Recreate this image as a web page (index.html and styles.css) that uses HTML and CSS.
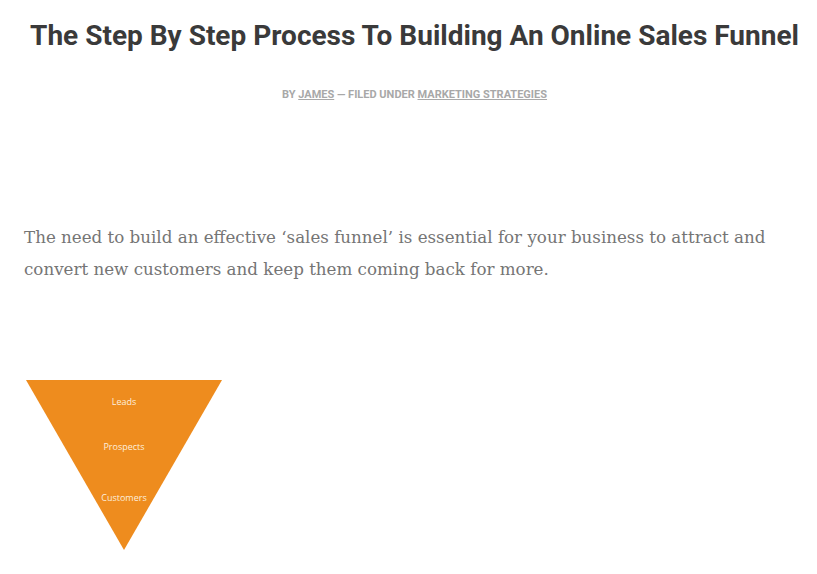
FILE: index.html
```html
<!DOCTYPE html>
<html lang="en">
<head>
    <meta charset="UTF-8">
    <meta name="viewport" content="width=device-width, initial-scale=1.0">
    <title>The Step By Step Process To Building An Online Sales Funnel</title>
    <link rel="stylesheet" href="styles.css">
</head>
<body>

<article class="post">
    <header class="post-header">
        <h1 class="post-title">The Step By Step Process To Building An Online Sales Funnel</h1>
        <p class="post-meta">By <a href="#">James</a> &mdash; Filed under <a href="#">Marketing Strategies</a></p>
    </header>

    <div class="post-content">
        <p class="lead">The need to build an effective &lsquo;sales funnel&rsquo; is essential for your business to attract and convert new customers and keep them coming back for more.</p>

        <figure class="funnel">
            <svg width="198" height="172" viewBox="0 0 198 172">
                <polygon points="1,1 197,1 99,171" fill="#ee8c1e"/>
                <text x="99" y="26" text-anchor="middle">Leads</text>
                <text x="99" y="71" text-anchor="middle">Prospects</text>
                <text x="99" y="122" text-anchor="middle">Customers</text>
            </svg>
        </figure>
    </div>
</article>

</body>
</html>
```

FILE: styles.css
```css
body {
    margin: 0;
    padding: 0;
    background-color: #fff;
    font-family: Roboto, "Liberation Sans", sans-serif;
}

.post {
    padding: 0 12px 0 24px;
}

.post-header {
    text-align: center;
    padding-top: 18px;
}

.post-title {
    font-size: 28px;
    font-weight: 700;
    color: #3a3a3a;
    margin: 0;
    line-height: 36px;
}

.post-meta {
    font-size: 11px;
    font-weight: 700;
    text-transform: uppercase;
    color: #a8a8a8;
    margin: 34px 0 0;
}

.post-meta a {
    color: #a8a8a8;
}

.lead {
    font-family: "DejaVu Serif", "Liberation Serif", serif;
    font-size: 16.7px;
    line-height: 32px;
    color: #757575;
    margin: 120px 0 0;
}

.funnel {
    margin: 94px 0 0 1px;
}

.funnel svg {
    display: block;
}

.funnel text {
    font-family: "Open Sans", sans-serif;
    font-size: 9px;
    fill: #fdeedd;
}
```
